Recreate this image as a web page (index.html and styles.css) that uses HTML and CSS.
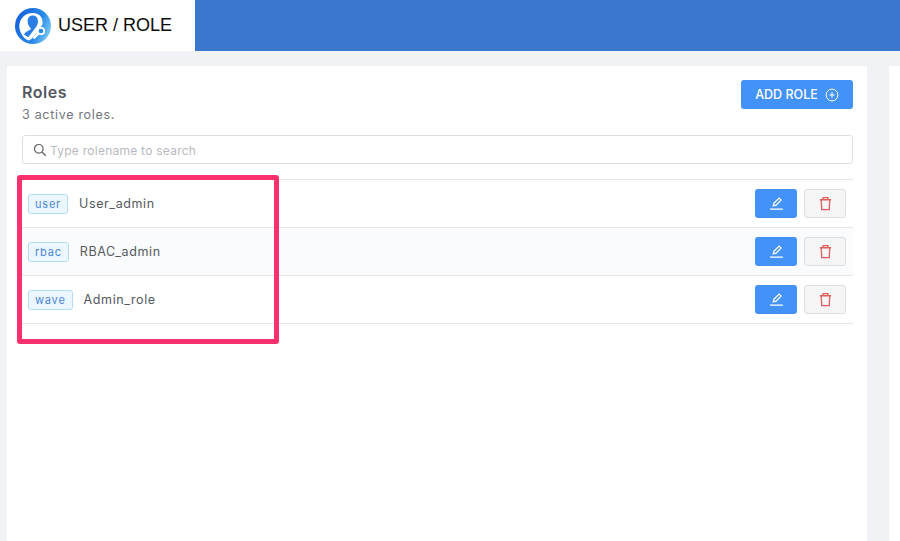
FILE: index.html
```html
<!DOCTYPE html>
<html lang="en">
<head>
    <meta charset="UTF-8">
    <meta name="viewport" content="width=device-width, initial-scale=1.0">
    <title>User / Role</title>
    <link rel="stylesheet" href="styles.css">
</head>
<body>
    <header class="topbar">
        <div class="brand">
            <svg class="brand-logo" viewBox="0 0 36 36">
                <defs>
                    <linearGradient id="logoFill" x1="0" y1="0.300" x2="1" y2="0.700">
                        <stop offset="0" stop-color="#1462dc"/>
                        <stop offset="0.650" stop-color="#2a8ae8"/>
                        <stop offset="1" stop-color="#7fcdf6"/>
                    </linearGradient>
                </defs>
                <circle cx="18" cy="18" r="18" fill="url(#logoFill)"/>
                <path d="M6 25c-1.500-3-2-6-1.500-9C5.500 9.500 11 5 17.500 5 20 5 22.500 5.800 24.500 7.300 27 9.500 28 12.500 27.500 16l-3 6-8 9-3 1.500C10 31 7.500 28.500 6 25z" fill="#fff"/>
                <path d="M9 26.500c.8-2.500 3.500-3.600 6.200-4.800.6-.3.6-1.400.1-2-1.700-1.800-2.700-4-2.700-6.500 0-3.300 2-5.700 5.200-5.700s5.200 2.400 5.200 5.700c0 1.800-.5 3.500-1.400 5L13.500 29C11.800 28.500 10.200 27.700 9 26.500z" fill="#2a7ee6"/>
                <path d="M23.800 25.200L18.500 30.500" stroke="#fff" stroke-width="2.400" fill="none"/>
                <circle cx="26" cy="23" r="3.200" fill="#2a8ae8" stroke="#fff" stroke-width="1.700"/>
            </svg>
            <span class="brand-name">USER / ROLE</span>
        </div>
        <div class="topbar-fill"></div>
    </header>

    <main class="content">
        <section class="card">
            <div class="card-head">
                <div>
                    <h1>Roles</h1>
                    <p>3 active roles.</p>
                </div>
                <button class="btn-add" type="button">
                    ADD ROLE
                    <svg class="icon-add" viewBox="0 0 14 14">
                        <circle cx="7" cy="7" r="5.900" fill="none" stroke="#fff" stroke-width="1"/>
                        <path d="M4.300 7h5.400M7 4.300v5.400" stroke="#fff" stroke-width="1.100"/>
                    </svg>
                </button>
            </div>

            <div class="search">
                <svg class="icon-search" viewBox="0 0 14 14">
                    <circle cx="5.800" cy="5.800" r="4.300" fill="none" stroke="#606266" stroke-width="1.200"/>
                    <path d="M9 9l3.800 3.800" stroke="#606266" stroke-width="1.300"/>
                </svg>
                <input type="text" placeholder="Type rolename to search">
            </div>

            <div class="role-list">
                <div class="role-row">
                    <span class="tag">user</span>
                    <span class="role-name">User_admin</span>
                    <div class="actions">
                        <button class="btn-edit" type="button">
                            <svg viewBox="0 0 14 14"><path d="M4 9.200l.7-2.600 4.700-4.700 1.900 1.900-4.700 4.700zM1 12.300h12" fill="none" stroke="#fff" stroke-width="1.200"/></svg>
                        </button>
                        <button class="btn-delete" type="button">
                            <svg viewBox="0 0 14 14"><path d="M1.800 3.500h10.400M4.800 3.500V1.500h4.400v2M3 3.500l.5 9.300h7l.5-9.300" fill="none" stroke="#e25c5c" stroke-width="1.200"/></svg>
                        </button>
                    </div>
                </div>
                <div class="role-row striped">
                    <span class="tag">rbac</span>
                    <span class="role-name">RBAC_admin</span>
                    <div class="actions">
                        <button class="btn-edit" type="button">
                            <svg viewBox="0 0 14 14"><path d="M4 9.200l.7-2.600 4.700-4.700 1.900 1.900-4.700 4.700zM1 12.300h12" fill="none" stroke="#fff" stroke-width="1.200"/></svg>
                        </button>
                        <button class="btn-delete" type="button">
                            <svg viewBox="0 0 14 14"><path d="M1.800 3.500h10.400M4.800 3.500V1.500h4.400v2M3 3.500l.5 9.300h7l.5-9.300" fill="none" stroke="#e25c5c" stroke-width="1.200"/></svg>
                        </button>
                    </div>
                </div>
                <div class="role-row">
                    <span class="tag">wave</span>
                    <span class="role-name">Admin_role</span>
                    <div class="actions">
                        <button class="btn-edit" type="button">
                            <svg viewBox="0 0 14 14"><path d="M4 9.200l.7-2.600 4.700-4.700 1.900 1.900-4.700 4.700zM1 12.300h12" fill="none" stroke="#fff" stroke-width="1.200"/></svg>
                        </button>
                        <button class="btn-delete" type="button">
                            <svg viewBox="0 0 14 14"><path d="M1.800 3.500h10.400M4.800 3.500V1.500h4.400v2M3 3.500l.5 9.300h7l.5-9.300" fill="none" stroke="#e25c5c" stroke-width="1.200"/></svg>
                        </button>
                    </div>
                </div>
            </div>

            <div class="highlight"></div>
        </section>
        <aside class="card-next"></aside>
    </main>
</body>
</html>
```

FILE: styles.css
```css
html, body {
    height: 100%;
}
body {
    margin: 0;
    height: 541px;
    overflow: hidden;
    background-color: #f0f2f6;
    font-family: "Inter", "Liberation Sans", sans-serif;
    color: #606266;
    display: flex;
    flex-direction: column;
}
.topbar {
    display: flex;
    height: 51px;
    flex-shrink: 0;
}
.brand {
    width: 195px;
    background-color: #fff;
    display: flex;
    align-items: center;
    gap: 7px;
    padding-left: 15px;
    box-sizing: border-box;
}
.brand-logo {
    width: 36px;
    height: 36px;
}
.brand-name {
    font-family: "Liberation Sans", Arial, sans-serif;
    font-size: 18px;
    color: #0b0b0b;
}
.topbar-fill {
    flex: 1;
    background-color: #3a77cc;
}
.content {
    flex: 1;
    display: flex;
    gap: 22px;
    padding: 15px 0 0 7px;
    min-height: 0;
}
.card {
    position: relative;
    width: 860px;
    flex-shrink: 0;
    background-color: #fff;
    padding: 14px 14px 0 15px;
    box-sizing: border-box;
}
.card-next {
    flex: 1;
    background-color: #fff;
}
.card-head {
    display: flex;
    justify-content: space-between;
    align-items: flex-start;
}
h1 {
    margin: 2px 0 0;
    font-size: 16px;
    line-height: 20px;
    font-weight: 600;
    letter-spacing: 0.5px;
    color: #55585f;
}
.card-head p {
    margin: 5px 0 0;
    font-size: 12.500px;
    line-height: 16px;
    letter-spacing: 0.7px;
    color: #71757c;
}
.btn-add {
    display: flex;
    align-items: center;
    gap: 7px;
    height: 29px;
    width: 112px;
    justify-content: center;
    padding: 0;
    border: none;
    border-radius: 3px;
    background-color: #4392f7;
    color: #fff;
    font-family: inherit;
    font-size: 12.500px;
    font-weight: 500;
}
.icon-add {
    width: 14px;
    height: 14px;
}
.search {
    display: flex;
    align-items: center;
    gap: 3px;
    height: 29px;
    margin-top: 12px;
    padding-left: 10px;
    border: 1px solid #dcdfe6;
    border-radius: 3px;
    box-sizing: border-box;
}
.icon-search {
    width: 14px;
    height: 14px;
}
.search input {
    flex: 1;
    border: none;
    outline: none;
    padding: 2px 0 0;
    font-family: inherit;
    font-size: 12px;
    letter-spacing: 0.25px;
    color: #606266;
}
.search input::placeholder {
    color: #b7bac0;
}
.role-list {
    margin-top: 15px;
    border-top: 1px solid #e4e6ea;
}
.role-row {
    display: flex;
    align-items: center;
    height: 48px;
    padding: 0 7px 0 6px;
    border-bottom: 1px solid #e4e6ea;
    box-sizing: border-box;
}
.striped {
    background-color: #fafbfc;
}
.tag {
    height: 20px;
    line-height: 19px;
    padding: 0 6px;
    border: 1px solid #b6dcf7;
    border-radius: 3px;
    background-color: #ebf6fe;
    color: #4d86d8;
    font-size: 11px;
    letter-spacing: 0.8px;
    box-sizing: border-box;
}
.role-name {
    margin-left: 11px;
    font-size: 12.500px;
    letter-spacing: 0.6px;
    color: #55585f;
}
.actions {
    margin-left: auto;
    display: flex;
    gap: 7px;
}
.actions button {
    width: 42px;
    height: 29px;
    padding: 0;
    border-radius: 3px;
    display: flex;
    align-items: center;
    justify-content: center;
}
.actions svg {
    width: 15px;
    height: 15px;
}
.btn-edit {
    border: none;
    background-color: #4392f7;
}
.btn-delete {
    border: 1px solid #dcdfe2;
    background-color: #f5f5f5;
}
/* annotation drawn over the list */
.highlight {
    position: absolute;
    left: 10px;
    top: 109px;
    width: 262px;
    height: 169px;
    border: 5px solid #f8306e;
    border-radius: 3px;
    box-sizing: border-box;
}
```
